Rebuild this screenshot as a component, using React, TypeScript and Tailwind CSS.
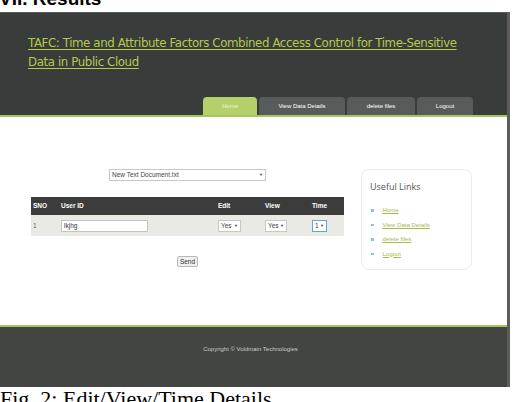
import React from 'react';

const tabs = [
  { label: 'Home', w: 'w-[54px]', active: true },
  { label: 'View Data Details', w: 'w-[86px]' },
  { label: 'delete files', w: 'w-[68px]' },
  { label: 'Logout', w: 'w-[56px]' },
];

const links = ['Home', 'View Data Details', 'delete files', 'Logout'];

const FakeSelect = ({ value, w, focus }: { value: string; w: string; focus?: boolean }) => (
  <div
    className={`${w} h-[12px] flex items-center justify-between px-[2px] bg-white border ${
      focus ? 'border-[#6f9ed8]' : 'border-[#c8c8c8]'
    } text-[6.5px] text-[#444]`}
  >
    <span>{value}</span>
    <span className="text-[4px]">▼</span>
  </div>
);

export default function App() {
  return (
    <div className="w-[515px] h-[402px] bg-white overflow-hidden font-['Liberation_Sans',Arial,sans-serif]">
      {/* cut-off section heading */}
      <div className="h-[12px] overflow-hidden">
        <div className="-mt-[11px] -ml-[1px] text-[19px] font-bold leading-none text-black">VII. Results</div>
      </div>

      {/* screenshot frame */}
      <div className="w-[510px] h-[375px] flex flex-col border-r-[3px] border-[#5b5d5c]">
        {/* header */}
        <div className="h-[103px] bg-[#383c3b] flex flex-col border-t border-[#555958]">
          <div className="pt-[21px] pl-[28px] whitespace-nowrap text-[11.8px] leading-[19px] text-[#b6c94a] underline underline-offset-2 font-['DejaVu_Sans',sans-serif] tracking-[-0.4px]">
            TAFC: Time and Attribute Factors Combined Access Control for Time-Sensitive
            <br />
            Data in Public Cloud
          </div>
          <div className="mt-auto flex gap-[2px] pl-[203px]">
            {tabs.map((t) => (
              <div
                key={t.label}
                className={`${t.w} h-[18px] rounded-t-[4px] flex items-center justify-center text-[6px] ${
                  t.active ? 'bg-[#b3d06a] text-[#eef5d8]' : 'bg-[#575b5a] text-white'
                }`}
              >
                {t.label}
              </div>
            ))}
          </div>
        </div>
        <div className="h-[2px] bg-[#a5c85a]" />

        {/* body */}
        <div className="flex-1 bg-white flex pt-[52px]">
          <div className="ml-[31px] w-[313px] flex flex-col items-center">
            <FakeSelect value="New Text Document.txt" w="w-[157px]" />
            <div className="mt-[16px] w-full">
              <div className="h-[18px] bg-[#3b3c3b] grid grid-cols-[30px_157px_47px_47px_32px] items-center text-[6.5px] font-bold text-white">
                <span className="pl-[2px]">SNO</span>
                <span>User ID</span>
                <span>Edit</span>
                <span>View</span>
                <span>Time</span>
              </div>
              <div className="h-[21px] bg-[#e9eae3] grid grid-cols-[30px_157px_47px_47px_32px] items-center text-[6.5px] text-[#666]">
                <span className="pl-[2px]">1</span>
                <div className="w-[87px] h-[12px] bg-white border border-[#c4c4c4] flex items-center px-[2px] text-[#333]">lkjhg</div>
                <FakeSelect value="Yes" w="w-[23px]" />
                <FakeSelect value="Yes" w="w-[22px]" />
                <FakeSelect value="1" w="w-[15px]" focus />
              </div>
            </div>
            <div className="mt-[20px] h-[11px] px-[2px] flex items-center bg-[#efefef] border border-[#b8b8b8] rounded-[2px] text-[6.5px] text-[#333]">
              Send
            </div>
          </div>

          <div className="ml-[17px] w-[111px] h-[101px] rounded-[8px] border border-[#ececec] pl-[8px] pt-[12px]">
            <div className="text-[9px] leading-none text-[#555] font-['Open_Sans',sans-serif]">Useful Links</div>
            <ul className="mt-[16px] flex flex-col gap-[7.5px]">
              {links.map((l) => (
                <li key={l} className="flex items-center h-[7px]">
                  <span className="w-[2.5px] h-[2.5px] bg-[#8fc0e0] ml-[1px] mr-[9px]" />
                  <span className="text-[6px] text-[#a9b84c] underline">{l}</span>
                </li>
              ))}
            </ul>
          </div>
        </div>

        {/* footer */}
        <div className="h-[2px] bg-[#a5c85a]" />
        <div className="h-[60px] bg-[#434543] flex justify-center pt-[18px]">
          <span className="text-[6px] text-[#c9cbc9] h-[8px] -ml-[6px]">Copyright © Voldmain Technologies</span>
        </div>
      </div>

      {/* caption */}
      <div className="mt-[1px] text-[22px] leading-none text-black whitespace-nowrap font-['Liberation_Serif',serif]">
        Fig. 2: Edit/View/Time Details
      </div>
    </div>
  );
}
